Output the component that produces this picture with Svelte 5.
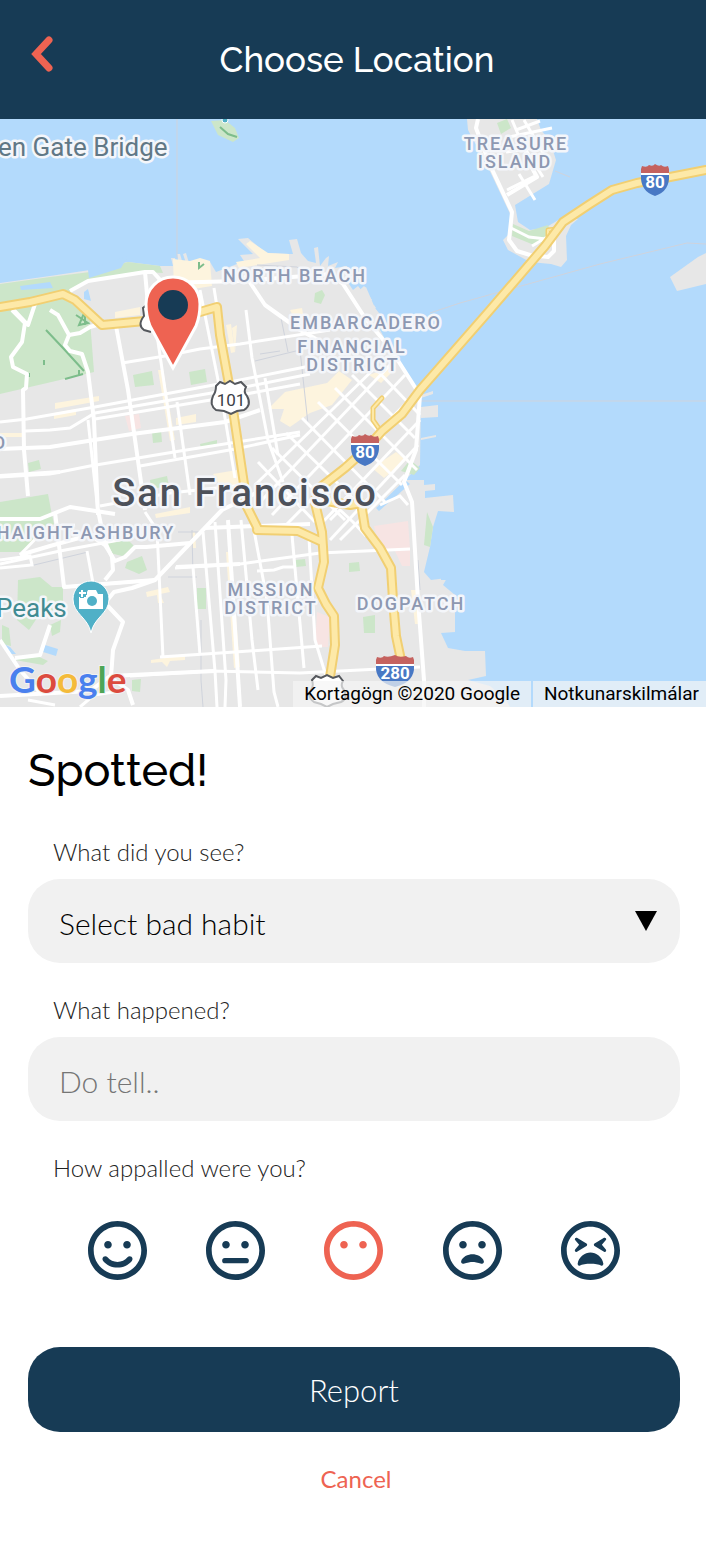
<script>
  let habit = $state('');
  let story = $state('');
  let rating = $state('blank');

  const ring =
    'M248 8C111 8 0 119 0 256s111 248 248 248 248-111 248-248S385 8 248 8zm0 448c-110.3 0-200-89.7-200-200S137.7 56 248 56s200 89.7 200 200-89.7 200-200 200z';
  const eyes =
    'M168 240c17.7 0 32-14.3 32-32s-14.3-32-32-32-32 14.3-32 32 14.3 32 32 32zm160 0c17.7 0 32-14.3 32-32s-14.3-32-32-32-32 14.3-32 32 14.3 32 32 32z';
  const squint =
    'M377.1 152.2c-3.8-4.4-10.3-5.4-15.3-2.5l-80 48c-3.6 2.2-5.8 6.1-5.8 10.3s2.2 8.1 5.8 10.3l80 48c5.4 3.2 11.7 1.7 15.3-2.5 3.8-4.5 3.8-11 .1-15.5L343.6 208l33.6-40.3c3.8-4.5 3.7-11.1-.1-15.5zM220 208c0-4.2-2.2-8.1-5.8-10.3l-80-48c-5-3-11.5-1.9-15.3 2.5-3.8 4.5-3.8 11-.1 15.5l33.6 40.3-33.6 40.3c-3.8 4.5-3.7 11 .1 15.5 3.5 4.1 9.9 5.7 15.3 2.5l80-48c3.6-2.2 5.8-6.1 5.8-10.3z';

  const faces = [
    { id: 'smile', eyes, mouth: 'M332 312.6c-20.8 25-51.5 39.4-84 39.4s-63.2-14.3-84-39.4c-8.5-10.2-23.7-11.5-33.8-3.1-10.2 8.5-11.5 23.6-3.1 33.8 30 36 74.1 56.6 120.9 56.6s90.9-20.6 120.9-56.6c8.5-10.2 7.1-25.3-3.1-33.8-10.1-8.4-25.3-7.1-33.8 3.1z' },
    { id: 'neutral', eyes, mouth: 'M158 320h180a22 22 0 0 1 0 44H158a22 22 0 0 1 0-44z' },
    { id: 'blank', eyes, mouth: '' },
    { id: 'frown', eyes, mouth: 'M248 288c-35.6 0-88.8 21.3-95.8 61.2-2 11.8 9 21.5 20.5 18.1 31.2-9.6 59.4-15.3 75.3-15.3s44.1 5.7 75.3 15.3c11.4 3.5 22.5-6.3 20.5-18.1-7-39.9-60.2-61.2-95.8-61.2z' },
    { id: 'tired', eyes: squint, mouth: 'M248 272c-45.4 0-100.9 38.3-107.8 93.3-1.5 11.8 6.9 21.6 15.5 17.9C178.4 373.6 212 368 248 368s69.6 5.6 92.3 15.2c8.7 3.7 17-6.1 15.5-17.9-6.9-55-62.4-93.3-107.8-93.3z' }
  ];

  const parks = [
    'M0 284L50 277 90 272 128 262 160 266 163 273 145 272 88 282 70 293 40 297 0 304z',
    'M0 310L62 298 72 304 90 320 94 372 60 380 0 394z',
    'M0 502L48 494 51 510 54 524 20 552 0 552z',
    'M133 375l19-4 2 14-19 2zM189 372l16-3 2 13-16 3zM152 432l9-2 1 12-9 1zM28 463l11-3 2 9-12 3zM150 480l17-4 2 10-18 3zM200 444l17-4 0 4-16 4z',
    'M315 293l7-3 3 5-4 9-7-2z',
    'M401 471l9-11 10 8-6 7z',
    'M18 580l22-3 12 10 11 0 0 20-24 8-10 15-12-10z',
    'M108 543l20-3 8 8-14 8-12-3zM127 562l15-6 5 14-8 4-14-6z',
    'M197 588h9v21h-9zM295 560l10-1 1 7-10 1zM349 563l10-1 1 9-11 1zM363 617l12-2 0 18-11 0z',
    'M2 625l7 3 2 18-9-2zM15 660l18-6 15 7-5 4zM50 625l11-5-1 12-8 4zM132 680l9-1-1 13-8-1z',
    'M427 512l6 15-3 20-6-2z',
    'M497 123l10-4 4 9-10 6zM513 224l16 7 19-6 5 14-19 6-22-9z',
    'M211 121l14-1 10 8 4 10-6 4-15-7z'
  ];

  const commerce = [
    'M173 259l17 2 10-3 10 3 2 25-38 6z',
    'M236 262l24-4-14-14 4-3 18 12 21 1 0 6-50 8z',
    'M55 403l44-7 0 5-44 8zM54 413l22-4 0 6-22 4zM0 433l24 0 0 4-24 0z',
    'M158 370l5 0 12 70-5 1zM176 418l20-4 0 8-20 3zM115 312l25-5 0 8-25 3zM226 325l5-1 4 28-4 1z',
    'M285 392l42-9 12-12 13 9-20 25-22 8-20 14-10-6 4-12-16 0z',
    'M372 468l24-16 10 8-22 18zM369 375l22-8 2 4-12 12z',
    'M155 514l35-7 0 6-34 5zM192 532l3 0 1 16-4 0zM146 592l22-5 2 5-10 2 4 9-6 0-1-8-10 2z',
    'M151 660l34-5 0 5-15 1-3 6-5-5-11 1zM226 552l5 0 9 115-6 1zM411 590l5 0 4 34-5 0z',
    'M213 474l24-4 5 16-18 7zM232 328l5-3-2 28z',
    'M290 310l12-2 1 6-9 4z'
  ];

  const minor = [
    'M122 363L165 356 200 349 240 344 330 330',
    'M0 422L27 419 95 407 235 381 310 366',
    'M25 431L50 430 70 428 95 413 235 389 310 374',
    'M95 419L235 396 300 384',
    'M0 477L50 474 90 466 180 451 300 432',
    'M140 466L235 449 300 435',
    'M100 506L170 493 235 486',
    'M0 564L60 551 130 538',
    'M65 587L155 580',
    'M175 568L240 564 320 553 410 549',
    'M257 571L274 570 283 567 295 567',
    'M130 676L210 671 300 673 420 667',
    'M160 657L235 652 322 646',
    'M156 328L175 458',
    'M177 402L190 495',
    'M200 290L222 400 235 478',
    'M214 288L235 420 242 478',
    'M246 310L252 358 268 440 283 482',
    'M265 378L278 455',
    'M88 420L98 512',
    'M145 512L157 530 163 658',
    'M87 551L93 583',
    'M193 567L200 655',
    'M203 532L215 671 217 707',
    'M215 522L226 680 225 707',
    'M241 520L252 640 258 690',
    'M253 525L267 600 274 692 278 707',
    'M292 535L304 668',
    'M309 538L315 640 326 676',
    'M0 560L30 556 32 565 0 568',
    'M20 555L44 530 75 525',
    'M537 179L512 120M519 174L535 200M509 137L552 128M506 152L555 145M517 136L543 177M524 120L550 165M516 130L540 121M507 190l30-15',
    'M511 228l18 9 17 2 8-8M532 246l15-9 6 5',
    'M330 520L340 510 353 522 366 536',
    'M380 505L400 496 408 505',
    'M28 700L55 705M80 707l14-12 20-3'
  ];

  const soma = [
    'M390 365L262 500','M405 375L272 515','M418 391L286 525','M420 420L320 525','M418 445L330 540','M405 475L340 540',
    'M370 363L420 415','M352 375L415 438','M335 388L417 470','M318 402L402 485','M302 418L385 502','M286 433L365 510','M272 448L345 520','M258 462L315 522','M378 365L255 485'
  ];

  const major = [
    'M70 291L88 281 145 272 153 272 163 283 240 281 330 274 343 284 365 318 390 348 420 395 416 450 404 482 412 502 418 600 424 680 424 707',
    'M145 272L148 305',
    'M0 449L50 447 132 434 225 422 260 410',
    'M0 476L60 472',
    'M12 310L25 323 22 342 11 357 13 367 27 374 26 388 23 390 24 450 28 496',
    'M12 308L28 325 35 304M50 310L58 315 69 335 65 345 70 351 82 354 88 372 94 420 98 515',
    'M69 335L80 333 90 327 100 324',
    'M245 275L265 305 300 330 323 343',
    'M116 326L128 390 140 475 145 510',
    'M0 519L40 519 70 507 115 514',
    'M20 555L50 546 90 535 105 545 115 561 125 557 135 547 146 547 190 543',
    'M55 512L64 587 155 580',
    'M98 510L104 540 112 557 113 570 105 580',
    'M262 490L222 510 155 580 132 588 114 592 105 603 123 622 113 650 110 690',
    'M110 677L128 690 133 705',
    'M0 640L20 670 42 695M50 625L40 655 15 658',
    'M0 696L90 691 110 676 215 671',
    'M176 567L240 564',
    'M205 528L310 524',
    'M228 520L240 707'
  ];

  const ramps = [
    'M382 398L373 408 373 420 380 430',
    'M548 237l0-7 9-1'
  ];

  const highways = [
    'M0 307L30 302 63 294 75 300 102 325 145 321 200 312 217 307 220 335 230 390 236 430 244 484 246 505 258 529',
    'M706 170L670 177 637 183 612 190 590 204 563 222 545 246 490 310 420 390 402 414 382 431 365 450 345 468 322 486 315 503 322 532 324 562 318 588 326 604 334 616 335 645 330 677',
    'M257 530L298 531 320 541',
    'M315 499L350 505 361 503 365 528 380 548 391 568 393 600 396 636 401 660'
  ];

  const labels = [
    { x: 516, y: 150, text: 'TREASURE' },
    { x: 515, y: 168, text: 'ISLAND' },
    { x: 295, y: 282, text: 'NORTH BEACH' },
    { x: 366, y: 329, text: 'EMBARCADERO' },
    { x: 352, y: 353, text: 'FINANCIAL' },
    { x: 353, y: 371, text: 'DISTRICT' },
    { x: 86, y: 539, text: 'HAIGHT-ASHBURY' },
    { x: 271, y: 596, text: 'MISSION' },
    { x: 271, y: 614, text: 'DISTRICT' },
    { x: 411, y: 610, text: 'DOGPATCH' }
  ];

  const interstates = [
    { x: 655, y: 180, n: '80', w: 14 },
    { x: 365, y: 450, n: '80', w: 14 },
    { x: 395, y: 671, n: '280', w: 19 }
  ];
</script>

<div class="page">
  <header>
    <button class="back" type="button" aria-label="Back">
      <svg viewBox="0 0 24 38" width="24" height="38" aria-hidden="true"><path d="M19 5L6 19l13 14" /></svg>
    </button>
    <h1>Choose Location</h1>
  </header>

  <section class="map" aria-label="Map">
    <svg class="canvas" viewBox="0 119 706 588">
      <g class="land">
        <path d="M0 283L50 276 90 270 128 262 160 266 173 266 171 258 175 258 177 266 179 265 177 254 180 254 183 264 186 263 183 254 186 253 189 263 200 259 210 262 216 272 232 266 244 261 240 255 253 254 238 239 248 238 266 253 289 254 293 254 289 240 297 239 301 253 308 261 316 263 314 248 318 247 320 266 326 258 329 256 328 266 338 262 335 268 347 266 349 284 353 290 358 286 363 292 355 296 366 287 375 308 383 318 380 330 399 365 408 378 421 393 420 465 405 480 424 480 424 485 435 484 435 490 425 491 425 498 453 495 454 512 438 511 433 527 430 547 424 572 431 580 447 578 443 585 455 595 455 632 441 633 448 648 465 651 485 651 486 676 468 680 490 686 506 700 510 707 0 707z" />
        <path d="M421 407l17-2 0 12-17 1zM421 398l12-4 0-3-12 4zM421 440l15-3 0-2-15 3zM352 297l12-11 2 2-12 11zM357 306l13-9 2 3-12 9zM362 313l12-8 2 3-12 8z" />
        <path d="M467 119L468 130 487 165 512 218 511 232 503 240 508 250 530 262 551 264 561 267 567 260 566 236 571 225 578 219 560 219 545 228 530 230 518 222 515 205 549 184 556 160 550 141 541 130 537 119z" />
        <path d="M670 277L698 257 706 253 706 284 677 291z" />
      </g>
      <path class="hospital" d="M125 416l14-2 2 14-12 3zM374 526l34-5 2 28-22 2-12-17zM317 612l13 5-2 30-13 0zM395 551l15-1 0 16-8 0z" />
      {#each parks as d}<path class="park" {d} />{/each}
      {#each commerce as d}<path class="commerce" {d} />{/each}
      <path class="water" d="M88 270L128 256 121 268 89 278zM20 286l30-4 3 6-32 2zM84 292l4-3 3 12-7-2zM405 480L376 508 379 511 410 484zM45 645l13 4-2 7-13-4zM0 642l10 5 6 7-8 0zM453 564h2v16h-14v-2h12z" />
      <g class="thicket">
        <path d="M76 315l12 8-9 2 6-14 0 14M46 330l17 18 21 23M65 379l18-5M79 370l0 5M44 360v5M29 373v4" />
        <path d="M199 262v6l5-4M220 127l8 7 9 3" />
      </g>
      <g class="rail">
        <path d="M177 119V258M421 401H706" />
        <path d="M430 313L460 303 600 264 687 243 706 244M555 171L570 177" />
        <path d="M255 361L300 350M260 354L280 351M281 318L288 352M300 350L308 424M178 532L200 532M30 566L88 552M168 577h29M192 530L193 578M201 620l0 60 2 27M418 560l2 30M257 265l40 2 12 8" />
      </g>
      <g class="minor">{#each minor as d}<path {d} />{/each}</g>
      <g class="minor">{#each soma as d}<path {d} />{/each}</g>
      <g class="major">{#each major as d}<path {d} />{/each}</g>
      <path class="major" d="M478 119L476 128 490 165 512 212 509 240 517 251 530 255 548 257 554 251 554 240M507 195l30-18-12-22" />
      <g class="casing ramp">{#each ramps as d}<path {d} />{/each}</g>
      <g class="highway ramp">{#each ramps as d}<path {d} />{/each}</g>
      <g class="casing">{#each highways as d}<path {d} />{/each}</g>
      <g class="highway">{#each highways as d}<path {d} />{/each}</g>

      <g class="route">
        <path d="M216 386l4-4 5 2 5-3 5 3 6-2 5 5q-3 5 1 9 5 9-3 14l-7 1-6 3-7-3-8-1q-7-5-3-14 3-4 3-10z" />
        <text x="231" y="406">101</text>
        <path d="M312 680l4-4 5 2 6-3 6 3 6-2 4 5q-3 5 1 9 4 9-3 12l-8 2-6 3-6-3-7-2q-7-5-3-12 3-4 1-10z" />
        <path d="M148 304l-5 4 1 8q-7 9 0 14l7 2" />
      </g>

      {#each interstates as s}
        <g transform="translate({s.x} {s.y})">
          <path fill="#c5625f" d="M{-s.w} -7v-4l1-3q5 2 7-1 4 2 {s.w - 8} -1 4 3 {s.w - 8} 1 3 3 7 1l1 3v4z" />
          <path fill="#4878c4" d="M{-s.w} -5H{s.w}Q{s.w + 1} 11 0 16 {-s.w - 1} 11 {-s.w} -5z" />
          <path stroke="#fff" stroke-width="2" d="M{-s.w} -6H{s.w}" />
          <text class="shield" y="8">{s.n}</text>
        </g>
      {/each}

      <text class="place" x="-2" y="156">en Gate Bridge</text>
      {#each labels as l}<text class="area" x={l.x} y={l.y}>{l.text}</text>{/each}
      <text class="area" x="0" y="449">O</text>
      <text class="city" x="245" y="506">San Francisco</text>
      <text class="place sight" x="-4" y="617">Peaks</text>

      <path fill="#50b0c7" stroke="#fff" stroke-width="1" d="M91 633C88 617 73 614 73 599a18 18 0 0 1 36 0C109 614 94 617 91 633z" />
      <path fill="#fff" d="M86 594l2-4h8l2 4h5v15H79v-12h7z" />
      <path stroke="#50b0c7" stroke-width="4" d="M82 589v9M78 593h9" />
      <path stroke="#fff" stroke-width="2" d="M82 590v7M79 593h7" />
      <circle cx="92" cy="601" r="5" fill="#50b0c7" />
      <circle cx="225" cy="120" r="3" fill="#50b0c7" stroke="#fff" />

      <path fill="#ee6352" stroke="#fff" stroke-width="3" d="M173 368L150 326Q146 316 146 304a27 27 0 0 1 54 0Q200 316 196 326z" />
      <circle cx="173" cy="305" r="15" fill="#173b55" />

      <text class="logo" x="9" y="693"><tspan fill="#4a80ee">G</tspan><tspan fill="#dc4b3e">o</tspan><tspan fill="#f4bb3a">o</tspan><tspan fill="#4a80ee">g</tspan><tspan fill="#4da556">l</tspan><tspan fill="#dc4b3e">e</tspan></text>
    </svg>
    <div class="credits">
      <span>Kortagögn ©2020 Google</span>
      <a href="#terms">Notkunarskilmálar</a>
    </div>
  </section>

  <form onsubmit={(e) => e.preventDefault()}>
    <h2>Spotted!</h2>

    <div class="field">
      <label for="habit">What did you see?</label>
      <div class="select">
        <select id="habit" bind:value={habit}>
          <option value="">Select bad habit</option>
        </select>
        <svg viewBox="0 0 22 20" width="22" height="20" aria-hidden="true"><path d="M0 0h22L11 20z" /></svg>
      </div>
    </div>

    <div class="field">
      <label for="story">What happened?</label>
      <input id="story" type="text" placeholder="Do tell.." bind:value={story} />
    </div>

    <fieldset>
      <legend>How appalled were you?</legend>
      <div class="faces">
        {#each faces as face}
          <label class="face" class:chosen={rating === face.id}>
            <input type="radio" name="rating" value={face.id} aria-label={face.id} bind:group={rating} />
            <svg viewBox="0 8 496 496" width="59" height="59" aria-hidden="true">
              <path d={ring} /><path d={face.eyes} /><path d={face.mouth} />
            </svg>
          </label>
        {/each}
      </div>
    </fieldset>

    <button class="report" type="submit">Report</button>
    <button class="cancel" type="button">Cancel</button>
  </form>
</div>

<style>
  :global(body) { margin: 0; background: #fff; }
  * { box-sizing: border-box; }
  .page { font-family: Lato, sans-serif; font-weight: 300; color: #000; }

  header {
    display: grid;
    grid-template-columns: 64px 1fr 56px;
    align-items: center;
    min-height: 119px;
    background: #173b55;
    color: #fff;
  }
  h1, h2 { margin: 0; font-family: Raleway, Lato, sans-serif; font-weight: 500; }
  h1 { font-size: 35px; line-height: 48px; text-align: center; }
  button { border: 0; background: none; font: inherit; cursor: pointer; }
  .back { justify-self: end; padding: 0 10px 12px; }
  .back svg { display: block; fill: none; stroke: #ee6352; stroke-width: 7; stroke-linecap: round; }

  .map { position: relative; overflow: hidden; background: #b3dafc; }
  .canvas { display: block; width: 100%; height: auto; fill: none; font-family: Roboto, sans-serif; }
  .land { fill: #e7e7e7; }
  .water { fill: #b3dafc; }
  .park { fill: #cce6c9; }
  .commerce { fill: #fdf4de; }
  .hospital { fill: #f7e4e3; }
  .thicket { stroke: #7dbd8b; stroke-width: 2; }
  .rail { stroke: #cfd3dc; stroke-width: 1; }
  .minor { stroke: #fff; stroke-width: 3; }
  .major { stroke: #fff; stroke-width: 4; stroke-linejoin: round; }
  .casing { stroke: #f1cf72; stroke-width: 10; stroke-linejoin: round; stroke-linecap: round; }
  .highway { stroke: #fde9a8; stroke-width: 6; stroke-linejoin: round; stroke-linecap: round; }
  .casing.ramp { stroke-width: 5; }
  .highway.ramp { stroke-width: 2; }
  .route path { fill: #fff; stroke: #55585d; stroke-width: 2; }
  .route text { fill: #3c4046; font-size: 17px; font-weight: 400; text-anchor: middle; }
  .shield { fill: #fff; font-size: 17px; font-weight: 700; text-anchor: middle; }
  .area, .place, .city { paint-order: stroke; stroke: #f4f6fa; stroke-width: 5; stroke-linejoin: round; }
  .area { fill: #8d98b1; font-size: 18px; font-weight: 500; letter-spacing: 2px; text-anchor: middle; }
  .place { fill: #617886; font-size: 26px; font-weight: 400; }
  .sight { fill: #418b92; }
  .city { fill: #4d515a; font-size: 38px; font-weight: 500; letter-spacing: 2px; text-anchor: middle; }
  .logo { font-family: Lato, sans-serif; font-size: 37px; font-weight: 700; paint-order: stroke; stroke: #f2f2f2; stroke-width: 2; }
  .credits {
    position: absolute;
    right: 0;
    bottom: 0;
    display: flex;
    gap: 2px;
    font: 400 19px/26px Roboto, sans-serif;
    color: #000;
  }
  .credits > * { padding: 0 11px; background: rgb(245 245 245 / 70%); }
  .credits a { padding-right: 7px; color: inherit; text-decoration: none; }

  form { display: flex; flex-direction: column; padding: 36px 26px 48px 28px; }
  h2 { margin-bottom: 38px; font-size: 45px; line-height: 56px; }
  .field { display: flex; flex-direction: column; gap: 12px; margin-bottom: 32px; }
  .field > label, legend { padding: 0 25px; font-size: 24px; line-height: 30px; color: #222; }
  .select { position: relative; display: flex; }
  .select svg { position: absolute; right: 23px; top: 32px; pointer-events: none; }
  select, input[type='text'] {
    width: 100%;
    height: 84px;
    padding: 4px 31px 0;
    border: 0;
    border-radius: 32px;
    background: #f1f1f1;
    color: #000;
    font: inherit;
    font-size: 30px;
    appearance: none;
  }
  select { padding-right: 64px; }
  input::placeholder { color: #757575; opacity: 1; }
  fieldset { min-width: 0; margin: 0; padding: 0; border: 0; }
  .faces { display: flex; justify-content: space-around; padding: 38px 30px 67px; }
  .face { display: grid; color: #173b55; cursor: pointer; }
  .face.chosen { color: #ee6352; }
  .face input { grid-area: 1 / 1; margin: 0; opacity: 0; }
  .face svg { grid-area: 1 / 1; fill: currentColor; }
  .report { height: 85px; padding: 0; border-radius: 32px; background: #173b55; color: #fff; font-size: 31px; }
  .cancel { align-self: center; margin-top: 32px; padding: 0 0 0 4px; color: #ee6352; font-size: 24px; font-weight: 400; line-height: 30px; }
</style>
